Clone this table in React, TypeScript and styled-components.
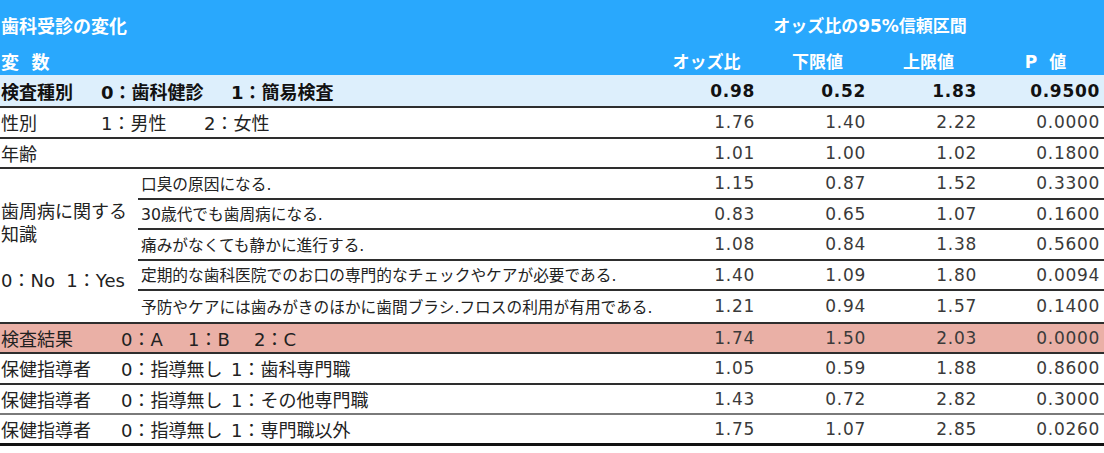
import React from "react";
import styled, { createGlobalStyle } from "styled-components";

const GlobalStyle = createGlobalStyle`
  html, body {
    margin: 0;
    padding: 0;
    background: #ffffff;
  }
  body {
    font-family: "DejaVu Sans", "Noto Sans CJK JP", sans-serif;
    color: #222;
  }
`;

const cols = "minmax(0, 1fr) 111px 111px 111px 123px";

type Opt = { text: string; w?: number };
type Item = {
  name: string;
  nameW?: number;
  opts: Opt[];
  vals: string[];
  tone?: "plain" | "key" | "alert";
  soft?: boolean;
  last?: boolean;
};

const topRows: Item[] = [
  {
    name: "検査種別",
    nameW: 100,
    opts: [{ text: "0：歯科健診", w: 130 }, { text: "1：簡易検査" }],
    vals: ["0.98", "0.52", "1.83", "0.9500"],
    tone: "key",
  },
  {
    name: "性別",
    nameW: 100,
    opts: [{ text: "1：男性", w: 103 }, { text: "2：女性" }],
    vals: ["1.76", "1.40", "2.22", "0.0000"],
  },
  { name: "年齢", opts: [], vals: ["1.01", "1.00", "1.02", "0.1800"] },
];

const knowledge = [
  { text: "口臭の原因になる.", vals: ["1.15", "0.87", "1.52", "0.3300"] },
  { text: "30歳代でも歯周病になる.", vals: ["0.83", "0.65", "1.07", "0.1600"] },
  { text: "痛みがなくても静かに進行する.", vals: ["1.08", "0.84", "1.38", "0.5600"] },
  {
    text: "定期的な歯科医院でのお口の専門的なチェックやケアが必要である.",
    vals: ["1.40", "1.09", "1.80", "0.0094"],
  },
  {
    text: "予防やケアには歯みがきのほかに歯間ブラシ.フロスの利用が有用である.",
    vals: ["1.21", "0.94", "1.57", "0.1400"],
  },
];

const bottomRows: Item[] = [
  {
    name: "検査結果",
    nameW: 120,
    opts: [{ text: "0：A", w: 67 }, { text: "1：B", w: 66 }, { text: "2：C" }],
    vals: ["1.74", "1.50", "2.03", "0.0000"],
    tone: "alert",
  },
  {
    name: "保健指導者",
    nameW: 120,
    opts: [{ text: "0：指導無し", w: 110 }, { text: "1：歯科専門職" }],
    vals: ["1.05", "0.59", "1.88", "0.8600"],
  },
  {
    name: "保健指導者",
    nameW: 120,
    opts: [{ text: "0：指導無し", w: 110 }, { text: "1：その他専門職" }],
    vals: ["1.43", "0.72", "2.82", "0.3000"],
    soft: true,
  },
  {
    name: "保健指導者",
    nameW: 120,
    opts: [{ text: "0：指導無し", w: 110 }, { text: "1：専門職以外" }],
    vals: ["1.75", "1.07", "2.85", "0.0260"],
    last: true,
  },
];

const DataRow = ({ item }: { item: Item }) => (
  <Row $tone={item.tone || "plain"} $soft={item.soft} $last={item.last}>
    <Label $bold={item.tone === "key"}>
      <Name $w={item.nameW}>{item.name}</Name>
      {item.opts.map((o) => (
        <Option key={o.text} $w={o.w}>
          {o.text}
        </Option>
      ))}
    </Label>
    {item.vals.map((v, i) => (
      <Num key={i} $bold={item.tone === "key"}>
        {v}
      </Num>
    ))}
  </Row>
);

const App = () => {
  return (
    <>
      <GlobalStyle />
      <Table>
        <Head>
          <HeadTop>
            <HeadTitle>歯科受診の変化</HeadTitle>
            <HeadSpan>オッズ比の95%信頼区間</HeadSpan>
          </HeadTop>
          <HeadCols>
            <HeadLeft>変&nbsp;&nbsp;数</HeadLeft>
            <HeadCell>オッズ比</HeadCell>
            <HeadCell>下限値</HeadCell>
            <HeadCell>上限値</HeadCell>
            <HeadCell>P&nbsp;&nbsp;値</HeadCell>
          </HeadCols>
        </Head>

        {topRows.map((r) => (
          <DataRow key={r.name} item={r} />
        ))}

        <Group>
          <GroupLabel>
            <div>歯周病に関する</div>
            <div>知識</div>
            <div>&nbsp;</div>
            <div>0：No&nbsp;&nbsp;1：Yes</div>
          </GroupLabel>
          <SubList>
            {knowledge.map((k) => (
              <SubRow key={k.text}>
                <SubText>{k.text}</SubText>
                {k.vals.map((v, i) => (
                  <Num key={i}>{v}</Num>
                ))}
              </SubRow>
            ))}
          </SubList>
        </Group>

        {bottomRows.map((r, i) => (
          <DataRow key={i} item={r} />
        ))}
      </Table>
    </>
  );
};

export default App;

const Table = styled.div`
  width: 1104px;
  display: flex;
  flex-direction: column;
`;

const Head = styled.div`
  background-color: #29a8fd;
  color: #ffffff;
  font-weight: bold;
  height: 75px;
  display: flex;
  flex-direction: column;
`;

const HeadTop = styled.div`
  height: 47px;
  display: grid;
  grid-template-columns: ${cols};
  align-items: center;
  padding-top: 2px;
  box-sizing: border-box;
`;

const HeadTitle = styled.div`
  font-size: 18px;
  padding-left: 1px;
`;

const HeadSpan = styled.div`
  grid-column: 3 / span 2;
  text-align: center;
  font-size: 17px;
`;

const HeadCols = styled.div`
  flex: 1;
  display: grid;
  grid-template-columns: ${cols};
  align-items: center;
  font-size: 17px;
  padding-bottom: 1px;
`;

const HeadLeft = styled.div`
  padding-left: 1px;
  font-size: 18px;
`;

const HeadCell = styled.div`
  text-align: center;
  padding-left: 6px;
`;

const toneColors = {
  plain: "#ffffff",
  key: "#ddeffc",
  alert: "#eab0a6",
};

const Row = styled.div<{
  $tone: "plain" | "key" | "alert";
  $soft?: boolean;
  $last?: boolean;
}>`
  display: grid;
  grid-template-columns: ${cols};
  align-items: center;
  box-sizing: border-box;
  height: ${(p) => (p.$tone === "key" ? "33px" : p.$last ? "31px" : "30.5px")};
  background-color: ${(p) => toneColors[p.$tone]};
  border-bottom: ${(p) =>
    p.$last ? "3px solid #111" : `2px solid ${p.$soft ? "#7a7a7a" : "#2e2e2e"}`};
`;

const Label = styled.div<{ $bold?: boolean }>`
  display: flex;
  align-items: center;
  font-size: 18px;
  font-weight: ${(p) => (p.$bold ? "bold" : "normal")};
  color: ${(p) => (p.$bold ? "#111" : "#222")};
  white-space: nowrap;
  padding-left: 1px;
`;

const Name = styled.span<{ $w?: number }>`
  width: ${(p) => (p.$w ? `${p.$w}px` : "auto")};
  flex-shrink: 0;
`;

const Option = styled.span<{ $w?: number }>`
  width: ${(p) => (p.$w ? `${p.$w}px` : "auto")};
  flex-shrink: 0;
`;

const Num = styled.div<{ $bold?: boolean }>`
  text-align: right;
  padding-right: 4px;
  font-size: 17px;
  letter-spacing: 0.7px;
  font-weight: ${(p) => (p.$bold ? "bold" : "normal")};
  color: ${(p) => (p.$bold ? "#111" : "#3a3a3a")};
`;

const Group = styled.div`
  display: grid;
  grid-template-columns: 138px minmax(0, 1fr);
  border-bottom: 2px solid #2e2e2e;
`;

const GroupLabel = styled.div`
  display: flex;
  flex-direction: column;
  justify-content: center;
  font-size: 18px;
  line-height: 23px;
  padding-left: 1px;
  white-space: nowrap;
  padding-top: 2px;
`;

const SubList = styled.div`
  display: flex;
  flex-direction: column;
  min-width: 0;
`;

const SubRow = styled.div`
  display: grid;
  grid-template-columns: ${cols};
  align-items: center;
  height: 30.5px;
  box-sizing: border-box;
  border-bottom: 2px solid #2e2e2e;
  &:last-child {
    border-bottom: none;
  }
`;

const SubText = styled.div`
  font-size: 15.7px;
  padding-left: 3px;
  white-space: nowrap;
`;
